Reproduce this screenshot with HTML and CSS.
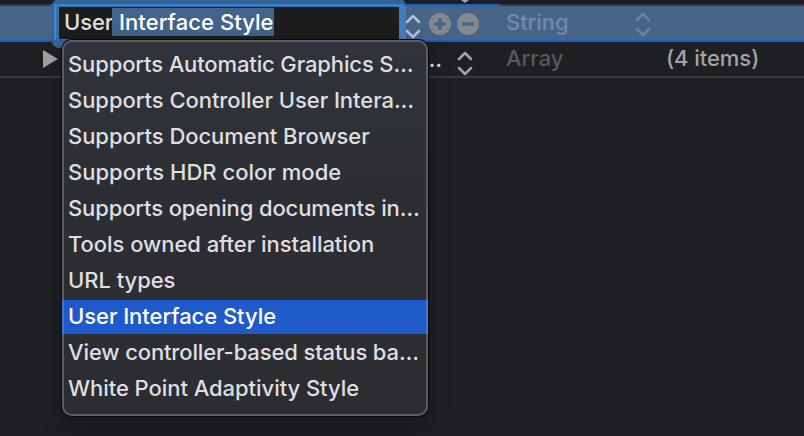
FILE: index.html
```html
<!DOCTYPE html>
<html lang="en">
<head>
<meta charset="utf-8">
<title>Property list</title>
<link rel="stylesheet" href="styles.css">
</head>
<body>
<main class="plist">
  <div class="row previous"><svg class="tip" viewBox="0 0 8 4"><path d="M0 0h8L4 3z"/></svg></div>
  <div class="row selected">
    <svg class="stepper key-stepper" viewBox="0 0 16 26"><path d="M2 9 8 3l6 6M2 18l6 6 6-6"/></svg>
    <svg class="round" viewBox="0 0 22 22"><circle cx="11" cy="11" r="11"/><path d="M5 11h12M11 5v12"/></svg>
    <svg class="round" viewBox="0 0 22 22"><circle cx="11" cy="11" r="11"/><path d="M5 11h12"/></svg>
    <span class="type">String</span>
    <svg class="stepper type-stepper" viewBox="0 0 16 26"><path d="M2 9 8 3l6 6M2 18l6 6 6-6"/></svg>
  </div>
  <div class="row array">
    <svg class="disclosure" viewBox="0 0 15 18"><path d="M0 0 15 9 0 18z"/></svg>
    <span class="dots">…</span>
    <svg class="stepper row-stepper" viewBox="0 0 16 26"><path d="M2 9 8 3l6 6M2 18l6 6 6-6"/></svg>
    <span class="type">Array</span>
    <span class="value">(4 items)</span>
  </div>
  <div class="accent"></div>
  <div class="ring"><div class="field"><span class="typed">User</span><span class="completion"> Interface Style</span></div></div>
  <ul class="menu">
    <li class="snug">Supports Automatic Graphics S…</li>
    <li>Supports Controller User Intera…</li>
    <li>Supports Document Browser</li>
    <li class="loose">Supports HDR color mode</li>
    <li class="snug">Supports opening documents in…</li>
    <li>Tools owned after installation</li>
    <li>URL types</li>
    <li class="active">User Interface Style</li>
    <li class="snug">View controller-based status ba…</li>
    <li>White Point Adaptivity Style</li>
  </ul>
</main>
</body>
</html>
```
FILE: styles.css
```css
* { box-sizing: border-box; }
body { margin: 0; background: #1e1f23; }
.plist {
  position: relative;
  width: 804px;
  height: 436px;
  overflow: hidden;
  background: #1e1f23;
  color: #dfdfe0;
  font: 450 22px/34px Inter, "Liberation Sans", sans-serif;
  letter-spacing: -.05px;
}
.row { display: flex; align-items: center; }
.previous { height: 6px; border-bottom: 2px solid #37383d; align-items: flex-start; }
.tip { width: 8px; height: 4px; margin-left: 461px; fill: #a3a3a5; }
.selected { height: 36px; padding-left: 406px; background: #476489; border-bottom: 2px solid #1c59cc; }
.array { height: 36px; padding-left: 43px; border-bottom: 2px solid #37383d; }
.row span { position: relative; top: -1px; }
.stepper { flex: none; width: 16px; height: 26px; fill: none; stroke: #a4a4a6; stroke-width: 2.5; stroke-linecap: round; stroke-linejoin: round; }
.key-stepper { margin: 6px 8px 0 -1px; stroke: #b3c1d3; }
.round { flex: none; width: 22px; height: 22px; margin: 2px 6px 0 0; fill: #84888f; stroke: #476489; stroke-width: 3.5; }
.round circle { stroke: none; }
.type { width: 129px; color: #748aa8; }
.selected .type { margin-left: 21px; }
.type-stepper { stroke: #6983a6; margin: 1px 0 0; }
.disclosure { width: 15px; height: 18px; fill: #a0a0a1; }
.dots { margin-left: 363px; width: 36px; }
.row .dots { left: 1px; top: 0; }
.row-stepper { margin-top: 7px; }
.array .type { margin-left: 33px; width: 160px; color: #58595c; }
.value { color: #a3a3a5; }
.accent { position: absolute; left: 50px; top: 4px; width: 450px; height: 2px; background: #1d5bd0; }
.ring {
  position: absolute;
  left: 52px;
  top: -1px;
  width: 354px;
  height: 49px;
  padding: 8px 7px 9px;
  border-radius: 7px;
  background:
    linear-gradient(#2f7fe2, #2f7fe2) 2px 5px / 350px 2px no-repeat,
    linear-gradient(90deg, #3f87d6 2px, #38709f 2px 340px, #417fba 340px) 2px 7px / 352px 34px no-repeat,
    linear-gradient(#1d61c4, #1d61c4) 2px 41px / 350px 2px no-repeat,
    #35648f;
}
.field { height: 32px; padding-left: 5px; line-height: 30px; background: #1d1d1d; }
.completion { display: inline-block; width: 162px; height: 28px; padding-left: 1px; line-height: 28px; margin: 1px 0 0 -1px; vertical-align: top; background: #44638b; color: #fff; white-space: pre; letter-spacing: .07px; }
.typed { display: inline-block; width: 49px; height: 30px; line-height: 30px; vertical-align: top; letter-spacing: -.1px; }
.menu {
  position: absolute;
  left: 62px;
  top: 40px;
  width: 366px;
  height: 376px;
  margin: 0;
  padding: 8px 0;
  list-style: none;
  border-radius: 10px;
  background: linear-gradient(#30343a, #2c2e33 40%, #2c2d31);
  box-shadow: inset 0 0 0 2px #5b5d60, 0 0 0 1px #090a0c, 0 8px 22px rgba(0, 0, 0, .28);
}
.menu li { height: 34px; margin-bottom: 2px; padding-left: 6px; line-height: 33px; white-space: nowrap; }
.menu .snug { letter-spacing: -.13px; }
.menu .loose { letter-spacing: .02px; }
.menu .active { background: #1f5aca; box-shadow: inset 2px 0 #4676d3, inset -2px 0 #4676d3; color: #fff; }
```
